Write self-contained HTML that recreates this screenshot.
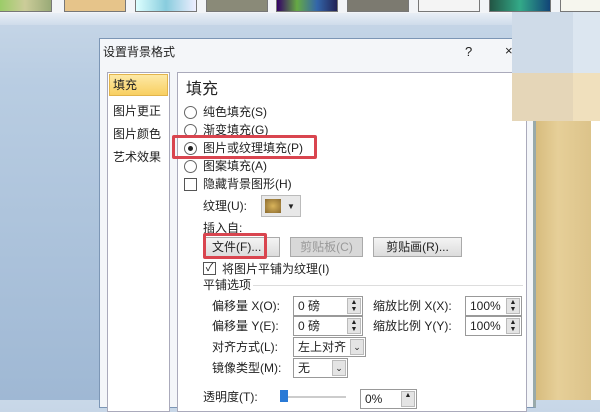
<!DOCTYPE html><html><head><meta charset="utf-8"><style>
*{margin:0;padding:0;box-sizing:border-box}
body{width:600px;height:400px;overflow:hidden;position:relative;background:linear-gradient(#c9d8e8 0,#b9cde2 80px,#9fb8d4 400px);font-family:"Liberation Sans","Noto Sans CJK SC",sans-serif;font-size:12px;color:#222}
.a{position:absolute}
.th{position:absolute;top:0;height:12px;border:1px solid #777;border-top:none}
.t{position:absolute;white-space:nowrap;line-height:14px}
.rd{position:absolute;width:13px;height:13px;border:1px solid #666;border-radius:50%;background:#fff}
.btn{position:absolute;height:20px;border:1px solid #aaa;background:linear-gradient(#f4f4f4,#dcdcdc);text-align:center;line-height:18px}
.in{position:absolute;height:20px;border:1px solid #999;background:#fff;line-height:18px;padding-left:4px}
.sp{position:absolute;right:1px;top:1px;width:14px;height:16px;background:#e4e4e4;border:1px solid #bbb;font-size:7px;line-height:7px;text-align:center}
.red{position:absolute;border:3px solid #d9454f;border-radius:2px}
</style></head><body>
<div class="a" style="left:0;top:0;width:600px;height:13px;background:#f2f4f7"></div>
<div class="th" style="left:-2px;width:54px;background:linear-gradient(90deg,#9c6,#cc9,#9a7)"></div>
<div class="th" style="left:64px;width:62px;background:#e6c48a"></div>
<div class="th" style="left:135px;width:62px;background:linear-gradient(90deg,#dff,#8cd,#eef)"></div>
<div class="th" style="left:206px;width:62px;background:#8a8a78"></div>
<div class="th" style="left:276px;width:62px;background:linear-gradient(90deg,#306,#6a4,#36a,#225)"></div>
<div class="th" style="left:347px;width:62px;background:#7c7a70"></div>
<div class="th" style="left:418px;width:62px;background:#f4f4f4"></div>
<div class="th" style="left:489px;width:62px;background:linear-gradient(90deg,#254,#3a8,#147)"></div>
<div class="th" style="left:560px;width:44px;background:#f6f6ee"></div>
<div class="a" style="left:0;top:13px;width:600px;height:12px;background:linear-gradient(#e8eef5,#cfdceb)"></div>
<!-- dialog -->
<div class="a" style="left:99px;top:38px;width:437px;height:370px;background:#f4f6f9;border:1px solid #7c96b5;border-right:3px solid #9aa"></div>
<div class="t" style="left:103px;top:45px;font-size:12px">设置背景格式</div>
<div class="t" style="left:465px;top:45px;font-size:13px">?</div>
<div class="t" style="left:505px;top:44px;font-size:13px">×</div>
<div class="a" style="left:107px;top:72px;width:63px;height:340px;background:#fff;border:1px solid #aab"></div>
<div class="a" style="left:109px;top:74px;width:59px;height:22px;background:linear-gradient(#fde9a6,#f8cf61);border:1px solid #e2b44b"></div>
<div class="t" style="left:113px;top:78px">填充</div>
<div class="t" style="left:113px;top:104px">图片更正</div>
<div class="t" style="left:113px;top:127px">图片颜色</div>
<div class="t" style="left:113px;top:150px">艺术效果</div>
<div class="a" style="left:177px;top:72px;width:350px;height:340px;background:#fff;border:1px solid #aab"></div>
<div class="t" style="left:186px;top:81px;font-size:16px;line-height:18px">填充</div>
<div class="rd" style="left:184px;top:106px"></div><div class="t" style="left:203px;top:105px">纯色填充(S)</div>
<div class="rd" style="left:184px;top:124px"></div><div class="t" style="left:203px;top:123px">渐变填充(G)</div>
<div class="rd" style="left:184px;top:142px"><div class="a" style="left:3px;top:3px;width:5px;height:5px;border-radius:50%;background:#222"></div></div><div class="t" style="left:203px;top:141px">图片或纹理填充(P)</div>
<div class="rd" style="left:184px;top:160px"></div><div class="t" style="left:203px;top:159px">图案填充(A)</div>
<div class="a" style="left:184px;top:178px;width:13px;height:13px;border:1px solid #555;background:#fff"></div><div class="t" style="left:203px;top:177px">隐藏背景图形(H)</div>
<div class="red" style="left:172px;top:135px;width:145px;height:24px"></div>
<div class="t" style="left:203px;top:199px">纹理(U):</div>
<div class="a" style="left:261px;top:195px;width:40px;height:22px;background:#e8e8e8;border:1px solid #bbb"></div>
<div class="a" style="left:265px;top:199px;width:16px;height:14px;background:radial-gradient(#d9b45a,#8a6a30)"></div>
<div class="t" style="left:287px;top:200px;font-size:8px">▼</div>
<div class="t" style="left:203px;top:221px">插入自:</div>
<div class="btn" style="left:205px;top:237px;width:75px;text-align:left;padding-left:6px">文件(F)...</div>
<div class="btn" style="left:290px;top:237px;width:73px;color:#999;background:#d8d8d8">剪贴板(C)</div>
<div class="btn" style="left:373px;top:237px;width:89px">剪贴画(R)...</div>
<div class="red" style="left:203px;top:233px;width:64px;height:26px"></div>
<div class="a" style="left:203px;top:262px;width:13px;height:13px;border:1px solid #555;background:#fff;font-size:11px;line-height:11px;text-align:center">✓</div>
<div class="t" style="left:222px;top:262px">将图片平铺为纹理(I)</div>
<div class="t" style="left:203px;top:278px">平铺选项</div>
<div class="a" style="left:253px;top:285px;width:270px;height:1px;background:#ddd"></div>
<div class="t" style="left:212px;top:299px">偏移量 X(O):</div>
<div class="in" style="left:293px;top:296px;width:70px">0 磅<div class="sp">▲<br>▼</div></div>
<div class="t" style="left:373px;top:299px">缩放比例 X(X):</div>
<div class="in" style="left:465px;top:296px;width:57px">100%<div class="sp">▲<br>▼</div></div>
<div class="t" style="left:212px;top:319px">偏移量 Y(E):</div>
<div class="in" style="left:293px;top:316px;width:70px">0 磅<div class="sp">▲<br>▼</div></div>
<div class="t" style="left:373px;top:319px">缩放比例 Y(Y):</div>
<div class="in" style="left:465px;top:316px;width:57px">100%<div class="sp">▲<br>▼</div></div>
<div class="t" style="left:212px;top:340px">对齐方式(L):</div>
<div class="in" style="left:293px;top:337px;width:73px">左上对齐<div class="sp" style="height:16px;font-size:9px;line-height:14px">⌄</div></div>
<div class="t" style="left:212px;top:361px">镜像类型(M):</div>
<div class="in" style="left:293px;top:358px;width:55px">无<div class="sp" style="height:16px;font-size:9px;line-height:14px">⌄</div></div>
<div class="t" style="left:203px;top:390px">透明度(T):</div>
<div class="a" style="left:280px;top:396px;width:66px;height:2px;background:#ccc"></div>
<div class="a" style="left:280px;top:390px;width:8px;height:12px;background:#2a7ad6"></div>
<div class="in" style="left:360px;top:389px;width:57px">0%<div class="sp">▲</div></div>
<!-- right -->
<div class="a" style="left:536px;top:120px;width:55px;height:280px;background:linear-gradient(90deg,#d7bc7e,#e6cf98 40%,#dcc38a)"></div>
<div class="a" style="left:591px;top:120px;width:9px;height:280px;background:#fff"></div>
<div class="a" style="left:512px;top:12px;width:61px;height:61px;background:#cfdbe8"></div>
<div class="a" style="left:573px;top:12px;width:27px;height:61px;background:#dce6f0"></div>
<div class="a" style="left:512px;top:73px;width:61px;height:48px;background:#e5d6b8"></div>
<div class="a" style="left:573px;top:73px;width:27px;height:48px;background:#f0e0bd"></div>
</body></html>
